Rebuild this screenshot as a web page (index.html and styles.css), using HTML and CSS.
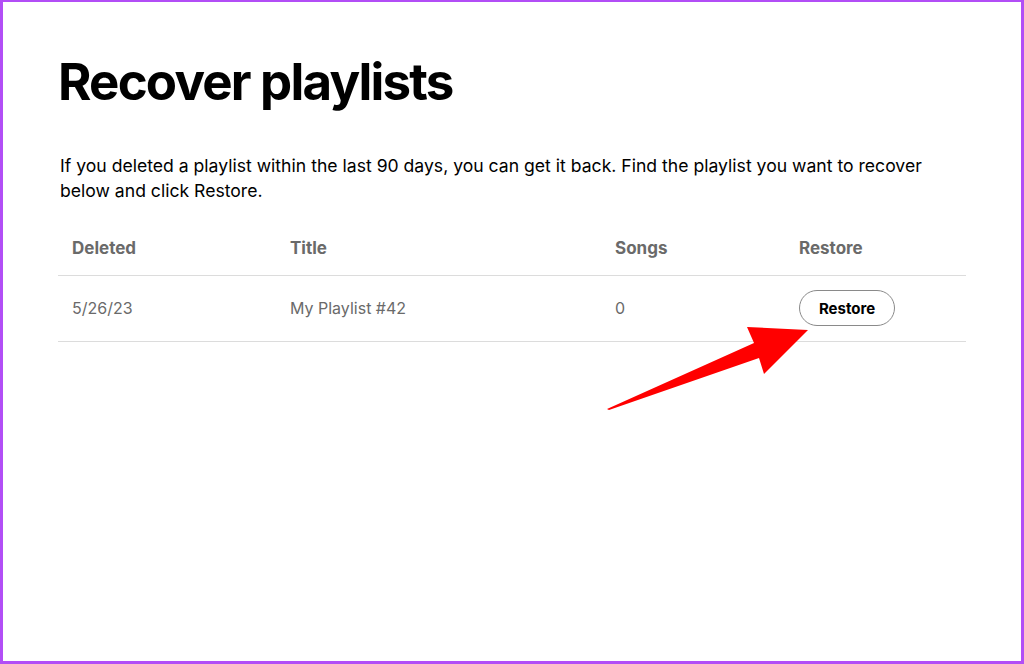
FILE: index.html
```html
<!DOCTYPE html>
<html lang="en">
<head>
<meta charset="utf-8">
<title>Recover playlists</title>
<link rel="stylesheet" href="styles.css">
</head>
<body>
<div class="frame">
  <main class="content">
    <h1 class="title">Recover playlists</h1>
    <p class="intro">If you deleted a playlist within the last 90 days, you can get it back. Find the playlist you want to recover below and click Restore.</p>
    <table class="list">
      <thead>
        <tr>
          <th class="c-deleted">Deleted</th>
          <th class="c-title">Title</th>
          <th class="c-songs">Songs</th>
          <th class="c-restore">Restore</th>
        </tr>
      </thead>
      <tbody>
        <tr>
          <td>5/26/23</td>
          <td>My Playlist #42</td>
          <td>0</td>
          <td><button class="restore-btn" type="button">Restore</button></td>
        </tr>
      </tbody>
    </table>
  </main>
  <svg class="arrow" width="1024" height="664" viewBox="0 0 1024 664" aria-hidden="true">
    <polygon points="607,409 754,343 747,327 808,330 764,374 759,358 609,410" fill="#ff0000"/>
  </svg>
</div>
</body>
</html>
```

FILE: styles.css
```css
* { box-sizing: border-box; }
html, body { margin: 0; padding: 0; background: #ffffff; }
body { font-family: Inter, "Noto Sans", "Liberation Sans", sans-serif; color: #000; }

.frame {
  position: relative;
  width: 1024px;
  height: 664px;
  border: 3px solid #b24ef6;
  border-top-width: 2px;
  overflow: hidden;
}

.content {
  padding: 48px 55px 0 55px;
}

.title {
  margin: 0;
  font-size: 51px;
  line-height: 64px;
  font-weight: 700;
  letter-spacing: -1.8px;
}

.intro {
  margin: 39px 0 0 2px;
  font-size: 17.6px;
  line-height: 25px;
  max-width: 900px;
}

.list {
  margin-top: 19px;
  width: 908px;
  border-collapse: collapse;
  font-size: 16px;
}

.list th {
  text-align: left;
  font-weight: 700;
  font-size: 17px;
  color: #6a6a6a;
  padding: 0 14px;
  height: 53px;
  border-bottom: 1px solid #dcdcdc;
}

.list td {
  color: #6a6a6a;
  padding: 0 14px;
  height: 66px;
  border-bottom: 1px solid #dcdcdc;
}

.c-deleted { width: 218px; }
.c-title { width: 325px; }
.c-songs { width: 184px; }
.c-restore { width: 181px; }

.restore-btn {
  font-family: inherit;
  font-size: 15px;
  font-weight: 700;
  color: #000;
  background: #fff;
  border: 1px solid #8a8a8a;
  border-radius: 18px;
  height: 36px;
  width: 96px;
  padding: 0;
}

.arrow {
  position: absolute;
  left: -3px;
  top: -2px;
  pointer-events: none;
}
```
